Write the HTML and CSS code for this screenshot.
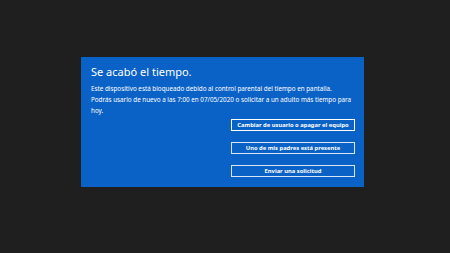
FILE: index.html
```html
<html>
<head>
<title>Se acabó el tiempo</title>
<link rel="stylesheet" href="styles.css">
</head>
<body>

<div id="panel">
  <h1>Se acabó el tiempo.</h1>
  <p class="message">Este dispositivo está bloqueado debido al control parental del tiempo en pantalla.<br>
  Podrás usarlo de nuevo a las 7:00 en 07/05/2020 o solicitar a un adulto más tiempo para<br>
  hoy.</p>

  <div id="actions">
    <button class="action focused">Cambiar de usuario o apagar el equipo</button>
    <button class="action">Uno de mis padres está presente</button>
    <button class="action">Enviar una solicitud</button>
  </div>
</div>

</body>
</html>
```

FILE: styles.css
```css
body {
  margin:0;
  padding:57px 0 0 81px;
  height:253px;
  box-sizing:border-box;
  background:#1f1f1f;
  font-family:"Noto Sans", "Open Sans", sans-serif;
}

#panel {
  width:283px;
  height:130px;
  box-sizing:border-box;
  background:#0b62c6;
  color:#fff;
  padding:7px 9px 0 10px;
}

#panel h1 {
  font-size:11px;
  font-weight:normal;
  margin:0;
  line-height:16px;
}

.message {
  font-size:6.3px;
  line-height:11px;
  margin:3px 0 0 0;
  white-space:nowrap;
}

#actions {
  display:flex;
  flex-direction:column;
  align-items:flex-end;
  gap:11px;
  margin-top:3px;
}

.action {
  width:124px;
  height:12px;
  padding:0;
  background:#0b62c6;
  color:#fff;
  border:1.5px solid #d8e6f7;
  font-family:inherit;
  font-size:5.8px;
  font-weight:bold;
  line-height:9px;
}

.action.focused {
  border-color:#fff;
}
```
